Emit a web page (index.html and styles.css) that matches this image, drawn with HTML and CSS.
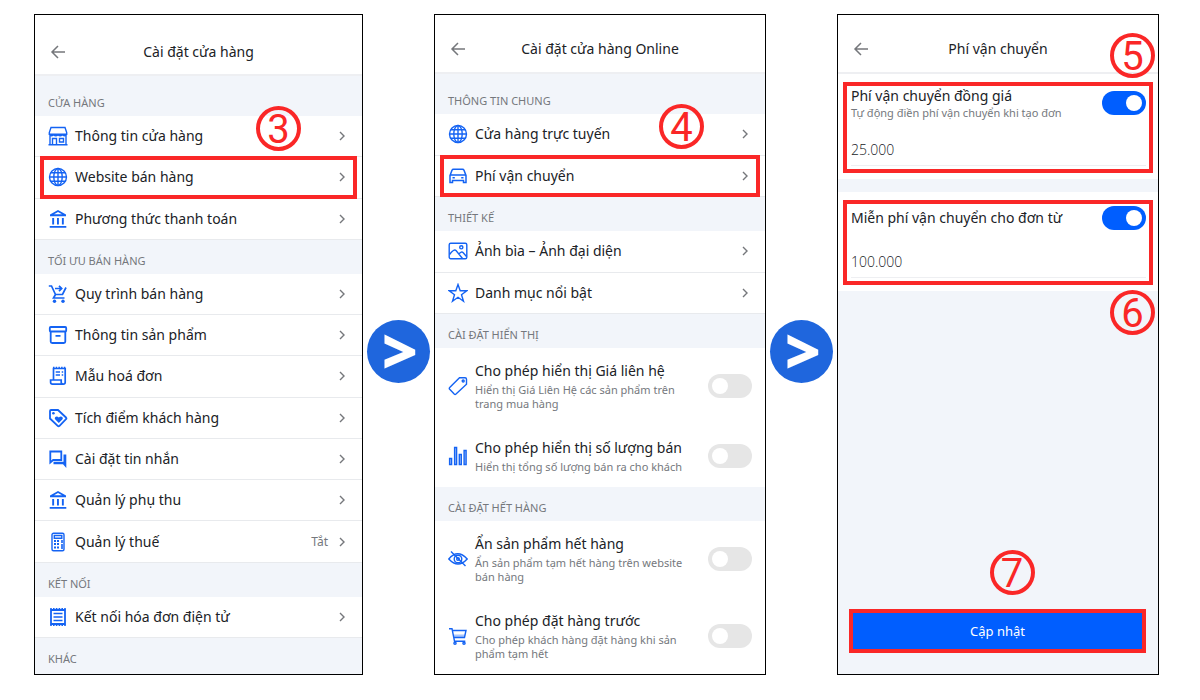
FILE: index.html
```html
<!DOCTYPE html>
<html lang="vi">
<head>
    <meta charset="UTF-8">
    <meta name="viewport" content="width=device-width, initial-scale=1.0">
    <title>Cài đặt phí vận chuyển</title>
    <link rel="stylesheet" href="styles.css">
</head>
<body>
    <!-- Icon set -->
    <svg class="sprite" aria-hidden="true">
        <symbol id="i-back" viewBox="0 0 16 16"><path d="M15 8H2M8 2L2 8l6 6"/></symbol>
        <symbol id="i-next" viewBox="0 0 6 10"><path d="M1 1l4 4-4 4"/></symbol>
        <symbol id="i-store" viewBox="0 0 20 20"><path d="M3 1.500h14l1.700 5v1.700H1.300V6.500zM2 9.500v9.200h16V9.500M1.300 7c0 3.500 4.300 3.500 4.300.500 0 3 4.400 3 4.400 0 0 3 4.400 3 4.400 0 0 3 4.300 3 4.300-.500M4.500 18.500v-6h4v6M11.500 12.500h4v3.500h-4zM.5 18.700h19"/></symbol>
        <symbol id="i-globe" viewBox="0 0 20 20"><circle cx="10" cy="10" r="8.500"/><ellipse cx="10" cy="10" rx="4.200" ry="8.500"/><path d="M10 1.500v17M1.500 10h17M2.800 5.700h14.400M2.800 14.300h14.400"/></symbol>
        <symbol id="i-bank" viewBox="0 0 20 20"><path class="solid" d="M10 1l8 4.500v1.700H2V5.500zM10 3L6 5.300h8zM4.200 9h1.900v6.500H4.200zM9 9h1.900v6.500H9zM13.900 9h1.900v6.500h-1.900zM1.700 17h16.600v1.700H1.700z" fill-rule="evenodd"/></symbol>
        <symbol id="i-order" viewBox="0 0 20 20"><g stroke-width="1.700"><path d="M.8 2h2.700l4 8.500h7l3.500-7M7.500 10.500L5.500 14h11"/><path d="M7 4.500h6.500M11 1.800l2.700 2.700L11 7.200"/></g><g class="solid"><circle cx="6.500" cy="17.200" r="1.700"/><circle cx="15" cy="17.200" r="1.700"/></g></symbol>
        <symbol id="i-box" viewBox="0 0 20 20"><g stroke-width="1.800"><path d="M2.700 6.500v10q0 1.500 1.500 1.500h11.600q1.500 0 1.500-1.500v-10M7.500 10.800h5"/><rect x="1.800" y="2" width="16.400" height="4.500" rx="1"/></g></symbol>
        <symbol id="i-bill" viewBox="0 0 20 20"><g stroke-width="1.700"><path d="M5.500 14V2.500h11.700v13.800q0 1.900-1.900 1.900H4.500q-1.900 0-1.900-1.900V14h10.600v2.300q0 1.900 2 1.900M7.700 6h4.300M7.700 9h4.300M13.700 6h1.500M13.700 9h1.500"/></g><path d="M5 1.500h12.500" stroke-dasharray="1.500 1.200"/></symbol>
        <symbol id="i-reward" viewBox="0 0 20 20"><path d="M3 2h7l8 7.500q.8.900 0 1.700l-6.500 6.600q-.900.900-1.800 0L2 10.500V3q0-1 1-1z" stroke-width="1.800"/><g class="solid"><circle cx="5.400" cy="5.300" r="1.300"/><path d="M10.800 15L7.300 11.500q-1.200-1.500 0-2.600 1.700-1.200 3.500.7 1.800-1.900 3.500-.7 1.200 1.100 0 2.600z"/></g></symbol>
        <symbol id="i-chat" viewBox="0 0 20 20"><path d="M2.300 2.500h11v8.500H5.200l-2.900 2.500z" stroke-width="1.800"/><path class="solid" d="M15.500 5.500h2.800V19L15 15.300H5.500v-2.500h10z"/></symbol>
        <symbol id="i-calc" viewBox="0 0 20 20"><rect x="4" y="1.200" width="12" height="17.600" rx="1.500"/><path d="M6.300 3.500h7.500v2.700H6.300z"/><path d="M6 9h6M6 12h6M6 15.500h6" stroke-width="1.800" stroke-dasharray="2 1"/><path d="M14 8v3M14 12v5" stroke-width="1.600"/></symbol>
        <symbol id="i-invoice" viewBox="0 0 20 20"><path d="M3 3h14v14H3z" stroke-width="1.800"/><path d="M5.500 6.500h9M5.500 10h9M5.500 13.500h9" stroke-width="1.700"/><path d="M2.200 1.800h15.600M2.200 18.200h15.600" stroke-width="1.600" stroke-dasharray="1.600 1.200"/></symbol>
        <symbol id="i-car" viewBox="0 0 20 20"><path d="M2 9.500L4 4.300q.4-1 1.500-1h9q1.100 0 1.500 1L18 9.500v7h-2.500v-2h-11v2H2zM2.500 9h15M4.500 11.700h2.300M13.200 11.700h2.300" stroke-width="1.500"/></symbol>
        <symbol id="i-image" viewBox="0 0 20 20"><rect x="1.200" y="2.200" width="17.600" height="15.600" rx="1.500"/><circle cx="13.300" cy="6.300" r="1.600"/><path d="M1.500 13.500Q6 7.500 8 9.500l6.500 8M11 13q2.500-3 4-1.500l3.500 4"/></symbol>
        <symbol id="i-star" viewBox="0 0 20 20"><path d="M10 1.500l2.200 6.200h6.600l-5.300 4 2 6.500L10 14.300l-5.500 3.900 2-6.500-5.300-4h6.600z"/></symbol>
        <symbol id="i-tag" viewBox="0 0 20 20"><path d="M11.500 1.700h5.500q1.500 0 1.500 1.500v5L8 18q-.9.800-1.800 0l-4.500-4.700q-.8-.9 0-1.700z"/><circle cx="15.200" cy="5" r="1"/></symbol>
        <symbol id="i-chart" viewBox="0 0 20 20"><path class="tint" d="M1.600 12.500h2v6h-2zM6.600 1.500h2v17h-2zM11.300 8.500h2v10h-2zM16.100 4.500h2v14h-2z"/></symbol>
        <symbol id="i-hide" viewBox="0 0 20 20"><path d="M.8 10Q9.500-.500 19.200 10 10 20 .8 10zM3 2.500L17.500 17"/><circle cx="10" cy="10" r="3.800"/><circle cx="10" cy="10" r="1.300"/></symbol>
        <symbol id="i-cart" viewBox="0 0 20 20"><path class="tint" d="M5.200 8.500h11.900l-.7 3H5.800z" stroke="none"/><path d="M1 2.700h3l2.500 12.500h10.800M4.500 4.500h13.500l-1.500 7H5.900"/><circle cx="7" cy="17.200" r="1.100"/><circle cx="16" cy="17.200" r="1.100"/></symbol>
    </svg>

    <main class="steps">
        <section class="phone phone-tall">
            <header class="bar">
                <button class="back" aria-label="Quay lại"><svg><use href="#i-back"/></svg></button>
                <h1>Cài đặt cửa hàng</h1>
            </header>
            <h2 class="group group-first">CỬA HÀNG</h2>
            <a class="row" href="#">
                <svg class="icon"><use href="#i-store"/></svg><span class="name">Thông tin cửa hàng</span>
                <svg class="next"><use href="#i-next"/></svg>
                <span class="badge badge-row">3</span>
            </a>
            <a class="row" href="#">
                <svg class="icon"><use href="#i-globe"/></svg><span class="name">Website bán hàng</span>
                <svg class="next"><use href="#i-next"/></svg>
                <span class="mark"></span>
            </a>
            <a class="row" href="#">
                <svg class="icon"><use href="#i-bank"/></svg><span class="name">Phương thức thanh toán</span>
                <svg class="next"><use href="#i-next"/></svg>
            </a>
            <h2 class="group">TỐI ƯU BÁN HÀNG</h2>
            <a class="row" href="#">
                <svg class="icon"><use href="#i-order"/></svg><span class="name">Quy trình bán hàng</span>
                <svg class="next"><use href="#i-next"/></svg>
            </a>
            <a class="row" href="#">
                <svg class="icon"><use href="#i-box"/></svg><span class="name">Thông tin sản phẩm</span>
                <svg class="next"><use href="#i-next"/></svg>
            </a>
            <a class="row" href="#">
                <svg class="icon"><use href="#i-bill"/></svg><span class="name">Mẫu hoá đơn</span>
                <svg class="next"><use href="#i-next"/></svg>
            </a>
            <a class="row" href="#">
                <svg class="icon"><use href="#i-reward"/></svg><span class="name">Tích điểm khách hàng</span>
                <svg class="next"><use href="#i-next"/></svg>
            </a>
            <a class="row" href="#">
                <svg class="icon"><use href="#i-chat"/></svg><span class="name">Cài đặt tin nhắn</span>
                <svg class="next"><use href="#i-next"/></svg>
            </a>
            <a class="row" href="#">
                <svg class="icon"><use href="#i-bank"/></svg><span class="name">Quản lý phụ thu</span>
                <svg class="next"><use href="#i-next"/></svg>
            </a>
            <a class="row" href="#">
                <svg class="icon"><use href="#i-calc"/></svg><span class="name">Quản lý thuế</span>
                <span class="state">Tắt</span>
                <svg class="next"><use href="#i-next"/></svg>
            </a>
            <h2 class="group">KẾT NỐI</h2>
            <a class="row" href="#">
                <svg class="icon"><use href="#i-invoice"/></svg><span class="name">Kết nối hóa đơn điện tử</span>
                <svg class="next"><use href="#i-next"/></svg>
            </a>
            <h2 class="group group-last">KHÁC</h2>
        </section>

        <div class="arrow">&gt;</div>

        <section class="phone">
            <header class="bar">
                <button class="back" aria-label="Quay lại"><svg><use href="#i-back"/></svg></button>
                <h1>Cài đặt cửa hàng Online</h1>
            </header>
            <h2 class="group group-first">THÔNG TIN CHUNG</h2>
            <a class="row" href="#">
                <svg class="icon"><use href="#i-globe"/></svg><span class="name">Cửa hàng trực tuyến</span>
                <svg class="next"><use href="#i-next"/></svg>
                <span class="badge badge-row">4</span>
            </a>
            <a class="row" href="#">
                <svg class="icon"><use href="#i-car"/></svg><span class="name">Phí vận chuyển</span>
                <svg class="next"><use href="#i-next"/></svg>
                <span class="mark"></span>
            </a>
            <h2 class="group">THIẾT KẾ</h2>
            <a class="row" href="#">
                <svg class="icon"><use href="#i-image"/></svg><span class="name">Ảnh bìa – Ảnh đại diện</span>
                <svg class="next"><use href="#i-next"/></svg>
            </a>
            <a class="row" href="#">
                <svg class="icon"><use href="#i-star"/></svg><span class="name">Danh mục nổi bật</span>
                <svg class="next"><use href="#i-next"/></svg>
            </a>
            <h2 class="group">CÀI ĐẶT HIỂN THỊ</h2>
            <label class="row option">
                <svg class="icon"><use href="#i-tag"/></svg>
                <span class="name">Cho phép hiển thị Giá liên hệ<small>Hiển thị Giá Liên Hệ các sản phẩm trên trang mua hàng</small></span>
                <input class="switch" type="checkbox">
            </label>
            <label class="row option">
                <svg class="icon"><use href="#i-chart"/></svg>
                <span class="name">Cho phép hiển thị số lượng bán<small>Hiển thị tổng số lượng bán ra cho khách</small></span>
                <input class="switch" type="checkbox">
            </label>
            <h2 class="group">CÀI ĐẶT HẾT HÀNG</h2>
            <label class="row option">
                <svg class="icon"><use href="#i-hide"/></svg>
                <span class="name">Ẩn sản phẩm hết hàng<small>Ẩn sản phẩm tạm hết hàng trên website bán hàng</small></span>
                <input class="switch" type="checkbox">
            </label>
            <label class="row option">
                <svg class="icon"><use href="#i-cart"/></svg>
                <span class="name">Cho phép đặt hàng trước<small>Cho phép khách hàng đặt hàng khi sản phẩm tạm hết</small></span>
                <input class="switch" type="checkbox">
            </label>
        </section>

        <div class="arrow">&gt;</div>

        <section class="phone">
            <header class="bar">
                <button class="back" aria-label="Quay lại"><svg><use href="#i-back"/></svg></button>
                <h1>Phí vận chuyển</h1>
            </header>
            <div class="field">
                <label class="field-head">
                    <span>Phí vận chuyển đồng giá<small>Tự động điền phí vận chuyển khi tạo đơn</small></span>
                    <input class="switch" type="checkbox" checked>
                </label>
                <input class="amount" type="text" value="25.000" aria-label="Phí vận chuyển">
                <span class="mark"></span>
                <span class="badge badge-above">5</span>
            </div>
            <div class="field">
                <label class="field-head">
                    <span>Miễn phí vận chuyển cho đơn từ</span>
                    <input class="switch" type="checkbox" checked>
                </label>
                <input class="amount" type="text" value="100.000" aria-label="Giá trị đơn từ">
                <span class="mark"></span>
                <span class="badge badge-below">6</span>
            </div>
            <div class="footer">
                <button class="submit">Cập nhật</button>
                <span class="mark"></span>
                <span class="badge badge-center">7</span>
            </div>
        </section>
    </main>
</body>
</html>
```
FILE: styles.css
```css
* {
    box-sizing: border-box;
}
body {
    margin: 0;
    background: white;
    color: #202226;
    font-family: "Noto Sans", sans-serif;
    font-size: 14px;
    line-height: 20px;
}
svg {
    display: block;
    fill: none;
    stroke: currentColor;
}
.solid {
    fill: currentColor;
    stroke: none;
}
.tint {
    fill: #a9c6fb;
}
.sprite {
    position: absolute;
    width: 0;
    height: 0;
}
.steps {
    display: grid;
    grid-template-columns: 329fr 71px 332fr 71px 322fr;
    min-height: 100vh;
    padding: 14px 41px 25px 34px;
}
.phone {
    display: flex;
    flex-direction: column;
    min-width: 0;
    background: #f2f5fa;
    border: 1px solid black;
}

/* Title bar */
.bar {
    display: grid;
    grid-template-columns: 46px 1fr 46px;
    align-items: center;
    flex: none;
    height: 59px;
    padding-top: 11px;
    background: white;
    border-bottom: 2px solid #eeeff2;
}
.phone-tall .bar {
    height: 61px;
    padding-top: 15px;
}
.bar h1 {
    margin: 0;
    font-size: 14px;
    font-weight: 400;
    text-align: center;
}
.back {
    width: 46px;
    padding: 0 0 0 15px;
    border: none;
    background: none;
    color: #75777b;
}
.back svg {
    width: 16px;
    height: 16px;
    stroke-width: 1.5;
}

/* Lists */
.group {
    flex: none;
    height: 34px;
    margin: 0;
    padding: 11px 13px 0;
    color: #75787d;
    font-size: 11px;
    font-weight: 400;
    line-height: 20px;
}
.group-first {
    height: 40px;
    padding-top: 17px;
}
.group-last {
    height: 36px;
}
.row {
    position: relative;
    display: flex;
    align-items: center;
    flex: 1 0 41px;
    padding: 0 17px 0 13px;
    background: white;
    border-bottom: 1px solid #e8eaed;
    color: inherit;
    text-decoration: none;
}
.icon {
    flex: none;
    width: 20px;
    height: 20px;
    margin-right: 7px;
    color: #1463f3;
    stroke-width: 1.4;
}
.name {
    flex: 1;
}
.state {
    margin-right: 11px;
    color: #75787d;
    font-size: 12px;
}
.next {
    width: 6px;
    height: 10px;
    color: #75777b;
    stroke-width: 1.4;
}
small {
    display: block;
    margin-top: 2px;
    color: #75787d;
    font-size: 11px;
    line-height: 14px;
}
.option {
    flex: 1 0 auto;
    padding: 13px;
    border-bottom: none;
}
.option .name {
    padding-right: 20px;
}

/* Toggle switch */
.switch {
    appearance: none;
    flex: none;
    width: 44px;
    height: 24px;
    margin: 0;
    padding: 4px;
    border-radius: 12px;
    background: #e6e6e6;
}
.switch::before {
    content: "";
    display: block;
    width: 16px;
    height: 16px;
    border-radius: 50%;
    background: white;
}
.switch:checked {
    background: #005eff;
}
.switch:checked::before {
    margin-left: 20px;
}

/* Shipping fee form */
.field {
    position: relative;
    margin-bottom: 13px;
    padding: 12px 12px 13px 13px;
    background: white;
}
.field-head {
    display: flex;
    justify-content: space-between;
    align-items: center;
    min-height: 28px;
}
.field small {
    margin-top: 0;
}
.amount {
    display: block;
    width: 100%;
    height: 32px;
    margin-top: 14px;
    padding: 0;
    border: none;
    border-bottom: 1px solid #eeeff2;
    background: none;
    color: inherit;
    font: inherit;
    font-family: "Open Sans", sans-serif;
    font-weight: 300;
}
.footer {
    position: relative;
    margin: auto 12px 23px 11px;
}
.submit {
    display: block;
    width: 100%;
    height: 40px;
    border: none;
    border-radius: 2px;
    background: #005eff;
    color: white;
    font: inherit;
    font-size: 13px;
}

/* Step annotations */
.mark {
    position: absolute;
    inset: -1px 5px;
    z-index: 1;
    border: 4px solid #fa2727;
    pointer-events: none;
}
.field .mark {
    inset: 8px 5px 6px;
}
.footer .mark {
    inset: -2px 0;
}
.badge {
    position: absolute;
    z-index: 2;
    width: 45px;
    height: 45px;
    border: 4px solid #fa2727;
    border-radius: 50%;
    color: #fa2727;
    font-family: Roboto, sans-serif;
    font-size: 40px;
    font-weight: 400;
    line-height: 39px;
    text-align: center;
}
.badge-row {
    top: -10px;
    right: 61px;
}
.badge-above {
    top: -41px;
    right: 3px;
}
.badge-below {
    bottom: -44px;
    right: 3px;
}
.badge-center {
    top: -61px;
    left: calc(50% - 8px);
}
.arrow {
    align-self: center;
    justify-self: center;
    width: 63px;
    height: 63px;
    margin-top: 14px;
    padding-left: 3px;
    border-radius: 50%;
    background: #1f66dd;
    color: white;
    font-family: "Open Sans", sans-serif;
    font-size: 62px;
    font-weight: 800;
    line-height: 60px;
    text-align: center;
}
```
